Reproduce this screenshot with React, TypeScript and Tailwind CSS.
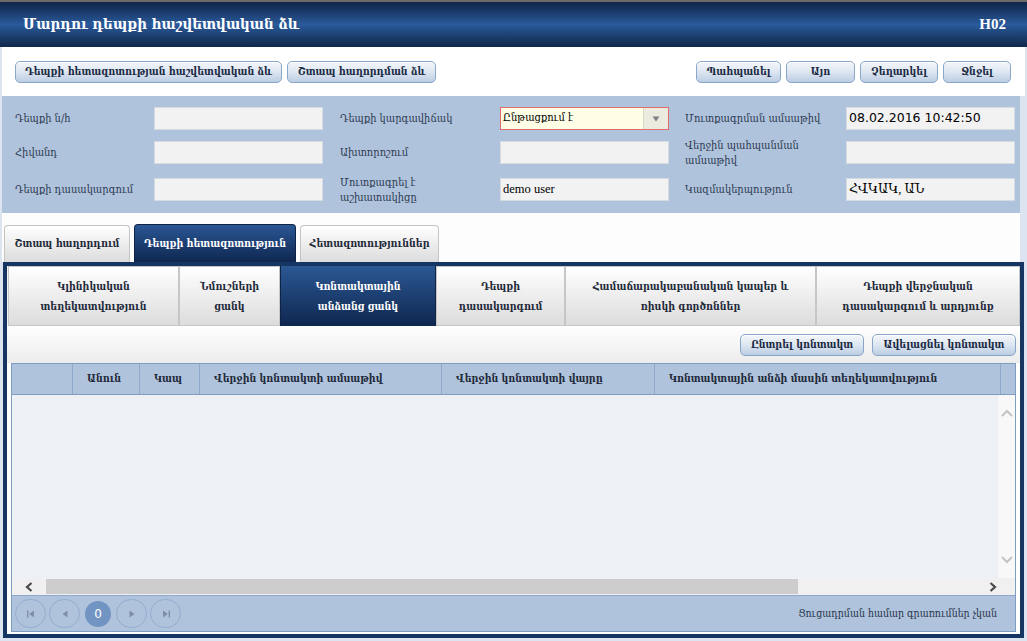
import React from "react";

const arm = "font-['DejaVu_Serif_Condensed','DejaVu_Serif',serif]";

function Btn({ label, w }: { label: string; w: number }) {
  return (
    <button
      style={{ width: w }}
      className={`h-[22px] rounded-[5px] border border-[#8aa6c8] bg-gradient-to-b from-[#f4f7fb] via-[#dde6f1] to-[#bccde3] text-[10.5px] font-bold text-[#1b2a44] shadow-[inset_0_1px_0_#fff] ${arm}`}
    >
      {label}
    </button>
  );
}

function Field({ value, sans }: { value?: string; sans?: boolean }) {
  return (
    <div
      className={`w-[169px] h-[23px] bg-[#f2f2f2] border border-[#d6dbe2] flex items-center px-[2px] text-[12.5px] text-black ${
        sans ? "font-['DejaVu_Sans',sans-serif]" : "font-['Liberation_Serif','DejaVu_Serif',serif]"
      }`}
    >
      {value}
    </div>
  );
}

function Label({ text, w }: { text: string; w: number }) {
  return (
    <div style={{ width: w }} className="shrink-0">
      <div className={`max-w-[140px] text-[11px] leading-[15px] text-[#2c3a52] ${arm}`}>{text}</div>
    </div>
  );
}

const subTabs = [
  { t: "Կլինիկական տեղեկատվություն", w: 171 },
  { t: "Նմուշների ցանկ", w: 101 },
  { t: "Կոնտակտային անձանց ցանկ", w: 156, active: true },
  { t: "Դեպքի դասակարգում", w: 129 },
  { t: "Համաճարակաբանական կապեր և ռիսկի գործոններ", w: 251 },
  { t: "Դեպքի վերջնական դասակարգում և արդյունք", w: 204 },
];

const cols = [
  { t: "", w: 61 },
  { t: "Անուն", w: 67 },
  { t: "Կապ", w: 60 },
  { t: "Վերջին կոնտակտի ամսաթիվ", w: 242 },
  { t: "Վերջին կոնտակտի վայրը", w: 213 },
  { t: "Կոնտակտային անձի մասին տեղեկատվություն", w: 346 },
];

function Tri({ dir, bar }: { dir: "l" | "r"; bar?: boolean }) {
  return (
    <svg width="10" height="8" viewBox="0 0 10 8">
      {dir === "l" ? (
        <>
          {bar && <rect x="1" y="0.5" width="1.4" height="7" fill="#7d8ea8" />}
          <path d={bar ? "M8 0.5 L3.2 4 L8 7.5 Z" : "M7.5 0.5 L2.5 4 L7.5 7.5 Z"} fill="#7d8ea8" />
        </>
      ) : (
        <>
          <path d={bar ? "M2 0.5 L6.8 4 L2 7.5 Z" : "M2.5 0.5 L7.5 4 L2.5 7.5 Z"} fill="#7d8ea8" />
          {bar && <rect x="7.6" y="0.5" width="1.4" height="7" fill="#7d8ea8" />}
        </>
      )}
    </svg>
  );
}

function Pager({ children, active }: { children: React.ReactNode; active?: boolean }) {
  return (
    <div
      className={
        active
          ? "w-[26px] h-[26px] mx-[2px] rounded-full bg-[#7194c2] flex items-center justify-center text-white text-[12px] font-['DejaVu_Sans',sans-serif]"
          : "w-[31px] h-[29px] rounded-full border border-[#93acd0] flex items-center justify-center"
      }
    >
      {children}
    </div>
  );
}

export default function App() {
  return (
    <div className="w-[1027px] h-[641px] bg-[#dce5ef] overflow-hidden flex flex-col">
      {/* Header */}
      <div className="h-[47px] border-t-2 border-[#6a6a6a] bg-gradient-to-b from-[#0f2547] via-[#2a5a9c] to-[#102849] flex items-center justify-between pl-[23px] pr-[21px]">
        <span className={`text-white text-[15px] font-bold ${arm}`}>Մարդու դեպքի հաշվետվական ձև</span>
        <span className="text-white text-[15px] font-bold font-['Liberation_Serif',serif]">H02</span>
      </div>

      {/* Toolbar */}
      <div className="h-[49px] bg-white mx-[2px] flex items-center justify-between px-[13px]">
        <div className="flex gap-[5px]">
          <Btn label="Դեպքի հետազոտության հաշվետվական ձև" w={267} />
          <Btn label="Շտապ հաղորդման ձև" w={149} />
        </div>
        <div className="flex gap-[5px] mr-[1px]">
          <Btn label="Պահպանել" w={85} />
          <Btn label="Այո" w={69} />
          <Btn label="Չեղարկել" w={78} />
          <Btn label="Ջնջել" w={68} />
        </div>
      </div>

      {/* Form */}
      <div className="h-[117px] bg-[#b0c3dc] mx-[2px] mr-[7px] pl-[13px] pt-[11px] flex flex-col gap-[11px]">
        <div className="h-[23px] flex items-center">
          <Label text="Դեպքի ն/հ" w={139} />
          <Field />
          <div className="w-[17px]" />
          <Label text="Դեպքի կարգավիճակ" w={160} />
          <div className="w-[169px] h-[23px] border border-[#e06c6c] bg-[#fefee6] flex items-center">
            <span className={`flex-1 px-[2px] text-[11px] text-black ${arm}`}>Ընթացքում է</span>
            <span className="w-[25px] h-full bg-[#ebebdf] border-l border-[#d8d8c8] flex items-center justify-center">
              <svg width="8" height="6" viewBox="0 0 8 6"><path d="M0.5 0.5 L7.5 0.5 L4 5.5 Z" fill="#808080" /></svg>
            </span>
          </div>
          <div className="w-[16px]" />
          <Label text="Մուտքագրման ամսաթիվ" w={161} />
          <Field value="08.02.2016 10:42:50" sans />
        </div>
        <div className="h-[23px] flex items-center">
          <Label text="Հիվանդ" w={139} />
          <Field />
          <div className="w-[17px]" />
          <Label text="Ախտորոշում" w={160} />
          <Field />
          <div className="w-[16px]" />
          <Label text="Վերջին պահպանման ամսաթիվ" w={161} />
          <Field />
        </div>
        <div className="h-[23px] flex items-center mt-[3px]">
          <Label text="Դեպքի դասակարգում" w={139} />
          <Field />
          <div className="w-[17px]" />
          <Label text="Մուտքագրել է աշխատակիցը" w={160} />
          <Field value="demo user" />
          <div className="w-[16px]" />
          <Label text="Կազմակերպություն" w={161} />
          <Field value="ՀՎԿԱԿ, ԱՆ" />
        </div>
      </div>

      {/* Tabs */}
      <div className="h-[49px] bg-[#fdfdfd] mx-[2px] mr-[7px] flex items-end gap-[4px] pl-[2px]">
        <div className={`w-[126px] h-[37px] rounded-t-[4px] border border-b-0 border-[#c4c4c4] bg-gradient-to-b from-white to-[#dcdcdc] flex items-center justify-center text-[10.5px] font-bold text-[#1f2a3a] ${arm}`}>
          Շտապ հաղորդում
        </div>
        <div className={`w-[162px] h-[38px] rounded-t-[4px] border border-b-0 border-[#0e2346] bg-gradient-to-b from-[#2b5795] to-[#0f2750] flex items-center justify-center text-[10.5px] font-bold text-white ${arm}`}>
          Դեպքի հետազոտություն
        </div>
        <div className={`w-[139px] h-[37px] rounded-t-[4px] border border-b-0 border-[#c4c4c4] bg-gradient-to-b from-white to-[#dcdcdc] flex items-center justify-center text-[10.5px] font-bold text-[#1f2a3a] ${arm}`}>
          Հետազոտություններ
        </div>
      </div>

      {/* Main container */}
      <div className="ml-[3px] mr-[3px] h-[376px] border-[4px] border-[#173563] bg-white flex flex-col">
        {/* Sub tabs */}
        <div className="h-[60px] flex pl-[1px] bg-[#f4f4f4]">
          {subTabs.map((s) => (
            <div
              key={s.t}
              style={{ width: s.w }}
              className={
                s.active
                  ? `h-full bg-gradient-to-b from-[#2c5894] to-[#0f2750] border-x border-[#0e2346] flex items-center justify-center text-center px-[18px] text-[10.5px] leading-[20px] font-bold text-white ${arm}`
                  : `h-full bg-gradient-to-b from-white to-[#dcdcdc] border border-[#c6c6c6] flex items-center justify-center text-center px-[14px] text-[10.5px] leading-[20px] font-bold text-[#1f2a3a] ${arm}`
              }
            >
              {s.t}
            </div>
          ))}
        </div>

        {/* Action bar */}
        <div className="h-[37px] bg-gradient-to-b from-white to-[#ececec] flex items-center justify-end gap-[8px] pr-[4px] pt-[1px]">
          <Btn label="Ընտրել կոնտակտ" w={124} />
          <Btn label="Ավելացնել կոնտակտ" w={144} />
        </div>

        {/* Table */}
        <div className="mx-[4px] flex-1 mb-[2px] bg-[#f2f2f2] border border-[#7f9dc2] flex flex-col">
          <div className="h-[31px] bg-[#b0c3dc] border-b border-[#7f9dc2] flex shrink-0">
            {cols.map((c, i) => (
              <div
                key={i}
                style={{ width: c.w }}
                className={`h-full border-r border-[#8ea9cc] flex items-center pl-[14px] text-[10.5px] font-bold text-[#1f2a3a] ${arm}`}
              >
                {c.t}
              </div>
            ))}
            <div className="flex-1 h-full" />
          </div>
          <div className="flex-1 flex bg-[#edf1f6]">
            <div className="flex-1" />
            <div className="w-[17px] bg-[#f8f8f8] flex flex-col items-center justify-between py-[14px]">
              <svg width="12" height="8" viewBox="0 0 12 8"><path d="M1 7 L6 2 L11 7" stroke="#c4c4c4" strokeWidth="2" fill="none" /></svg>
              <svg width="12" height="8" viewBox="0 0 12 8"><path d="M1 1 L6 6 L11 1" stroke="#c4c4c4" strokeWidth="2" fill="none" /></svg>
            </div>
          </div>
          <div className="h-[17px] bg-[#f0f0f0] flex items-center shrink-0">
            <div className="w-[34px] flex justify-center">
              <svg width="8" height="10" viewBox="0 0 8 10"><path d="M6.5 1 L2 5 L6.5 9" stroke="#4a4a4a" strokeWidth="2.2" fill="none" /></svg>
            </div>
            <div className="w-[752px] h-[15px] bg-[#cdcdcd]" />
            <div className="flex-1" />
            <div className="w-[34px] flex justify-center mr-[5px]">
              <svg width="8" height="10" viewBox="0 0 8 10"><path d="M1.5 1 L6 5 L1.5 9" stroke="#4a4a4a" strokeWidth="2.2" fill="none" /></svg>
            </div>
          </div>
          <div className="h-[36px] bg-[#b0c3dc] border-t border-[#8ea9cc] flex items-center px-[3px] shrink-0">
            <div className="flex items-center gap-[3px]">
              <Pager><Tri dir="l" bar /></Pager>
              <Pager><Tri dir="l" /></Pager>
              <Pager active>0</Pager>
              <Pager><Tri dir="r" /></Pager>
              <Pager><Tri dir="r" bar /></Pager>
            </div>
            <div className="flex-1" />
            <span className={`text-[10.5px] text-[#26344a] mr-[15px] ${arm}`}>Ցուցադրման համար գրառումներ չկան</span>
          </div>
        </div>
      </div>
    </div>
  );
}
